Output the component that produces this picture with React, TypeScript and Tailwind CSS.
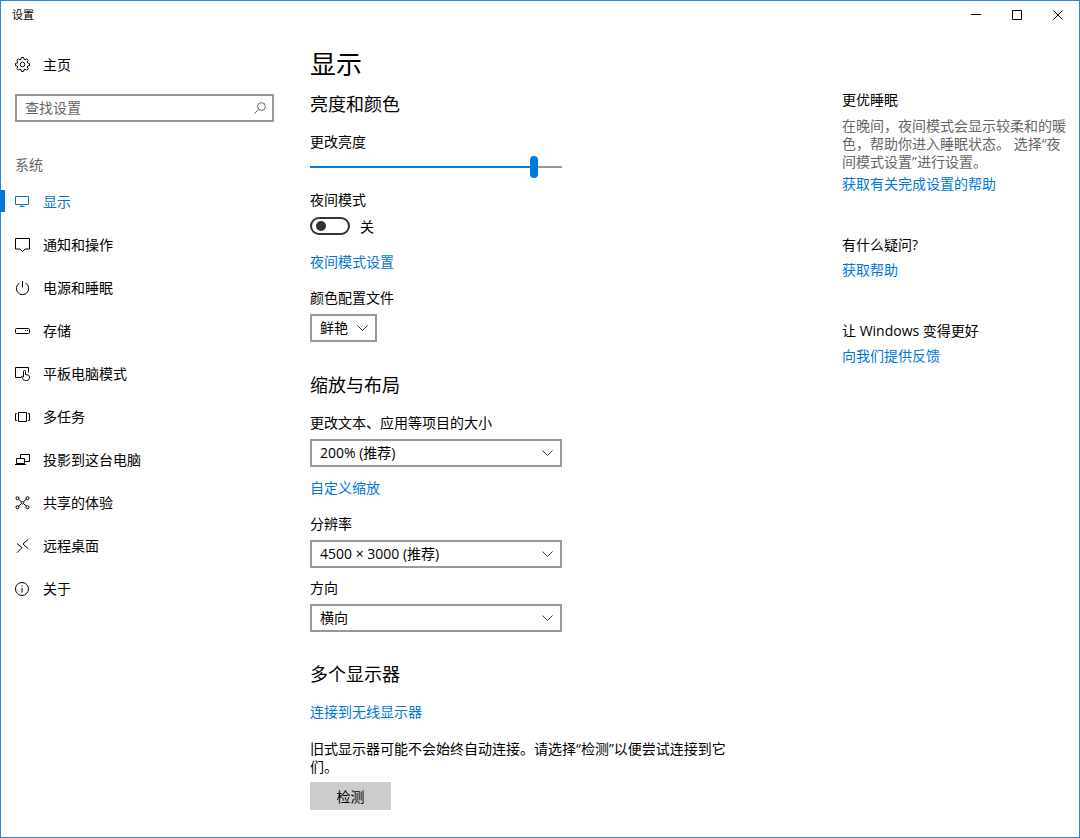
import {useState} from "react";
import type {CSSProperties, ReactNode} from "react";

const NAV_ITEMS = [
  {id: "display", label: "显示"},
  {id: "notifications", label: "通知和操作"},
  {id: "power", label: "电源和睡眠"},
  {id: "storage", label: "存储"},
  {id: "tablet", label: "平板电脑模式"},
  {id: "multitasking", label: "多任务"},
  {id: "projecting", label: "投影到这台电脑"},
  {id: "shared", label: "共享的体验"},
  {id: "remote", label: "远程桌面"},
  {id: "about", label: "关于"},
];

const GLYPHS: Record<string, ReactNode> = {
  display: <path d="M1.5 2.5h13v8h-13zM8 10.5v2M5.5 12.5h5" />,
  notifications: <path d="M1.5 1.5h14V12H11l-2.5 2.5L6 12H1.5z" />,
  power: <path d="M8.5 1v6.5M5.5 3a6.2 6.2 0 1 0 6 0" />,
  storage: (
    <>
      <rect x="1.5" y="5.5" width="14" height="5" rx="1" />
      <path d="M11 7.5h1M13 7.5h1" />
    </>
  ),
  tablet: (
    <path d="M7 11.5H1.5v-10h13v5M9.5 11V5.5a1 1 0 0 1 2 0v3l2.8.7c.8.2 1.2.8 1.2 1.6 0 2.2-.9 3.7-2.8 3.7h-1.4c-1.1 0-1.9-.6-2.5-1.6l-1.4-2.3c.7-.6 1.5-.3 2.1.4" />
  ),
  multitasking: <path d="M4.5 3.5h8v9h-8zM2.8 4.5H1.5v7h1.3M14.2 4.5h1.3v7h-1.3" />,
  projecting: <path d="M6.5 6.5v-4h9v7h-5M2.5 11.5v-5h8v5zM1 12.5h11" />,
  shared: (
    <>
      <circle cx="3.5" cy="3.2" r="1.5" />
      <circle cx="13.5" cy="3.2" r="1.5" />
      <circle cx="3.5" cy="12.2" r="1.5" />
      <circle cx="13.5" cy="12.2" r="1.5" />
      <circle cx="8.5" cy="7.7" r="1.3" />
      <path d="m4.6 4.2 2.9 2.6M12.4 4.2 9.5 6.8M4.6 11.2l2.9-2.6M12.4 11.2 9.5 8.6" />
    </>
  ),
  remote: <path d="m3 5.5 5 4.2-5 5M14 1.5 9 6l5 4.5" />,
  about: (
    <>
      <circle cx="8" cy="8" r="6.5" />
      <path d="M8 7v4.5M8 4.5v1" />
    </>
  ),
  home: (
    <>
      <path
        strokeLinejoin="round"
        d="M7.4 1.5h2.2l.4 1.8 1.1.5 1.6-1 1.5 1.5-1 1.6.5 1.1 1.8.4v2.2l-1.8.4-.5 1.1 1 1.6-1.5 1.5-1.6-1-1.1.5-.4 1.8H7.4L7 13.700l-1.100-.5-1.600 1-1.500-1.500 1-1.600-.5-1.100-1.800-.4V7.400L3.300 7l.5-1.100-1-1.600 1.500-1.500 1.600 1L7 3.300z"
      />
      <circle cx="8.5" cy="8.5" r="2.3" />
    </>
  ),
};

function Glyph({name}: {name: string}) {
  return (
    <svg viewBox="0 0 16 16" className="size-4 shrink-0 overflow-visible" fill="none" stroke="currentColor" aria-hidden="true">
      {GLYPHS[name]}
    </svg>
  );
}

function SectionTitle({children}: {children: ReactNode}) {
  return <h2 className="text-lg leading-7">{children}</h2>;
}

function TextLink({className = "", children}: {className?: string; children: ReactNode}) {
  return (
    <a href="#" className={`block w-fit leading-5 text-[#0078d7] hover:text-[#666] ${className}`}>
      {children}
    </a>
  );
}

type SelectFieldProps = {
  id: string;
  label: string;
  options: string[];
  className: string;
  compact?: boolean;
};

function SelectField({id, label, options, className, compact}: SelectFieldProps) {
  return (
    <div className={className}>
      <label htmlFor={id} className="block leading-5">
        {label}
      </label>
      <div className={`relative mt-1.5 ${compact ? "w-[67px]" : "max-w-[252px]"}`}>
        <select
          id={id}
          className="block h-7 w-full appearance-none border-2 border-[#999] bg-white pr-6 pb-0.5 pl-2 outline-none hover:border-[#666]"
        >
          {options.map((option) => (
            <option key={option}>{option}</option>
          ))}
        </select>
        <svg
          viewBox="0 0 12 8"
          className="pointer-events-none absolute top-2.5 right-2 h-2 w-3"
          fill="none"
          stroke="#333"
          aria-hidden="true"
        >
          <path d="m.5 1.5 5 5 5-5" />
        </svg>
      </div>
    </div>
  );
}

function TitleBar() {
  return (
    <header className="flex h-7 items-center justify-between pr-px pl-[11px]">
      <span className="text-[11px]">设置</span>
      <div className="flex h-full">
        <button type="button" aria-label="最小化" className="grid w-[41px] place-items-center hover:bg-[#e5e5e5]">
          <svg viewBox="0 0 10 10" className="size-2.5" stroke="currentColor" fill="none">
            <path d="M0 4.5h10" />
          </svg>
        </button>
        <button type="button" aria-label="最大化" className="grid w-[41px] place-items-center hover:bg-[#e5e5e5]">
          <svg viewBox="0 0 10 10" className="size-2.5" stroke="currentColor" fill="none">
            <path d="M.5.5h9v9h-9z" />
          </svg>
        </button>
        <button type="button" aria-label="关闭" className="grid w-[41px] place-items-center hover:bg-[#e81123] hover:text-white">
          <svg viewBox="0 0 10 10" className="size-2.5" stroke="currentColor" fill="none">
            <path d="m.5.5 9 9M9.5.5l-9 9" />
          </svg>
        </button>
      </div>
    </header>
  );
}

function Sidebar() {
  const [active, setActive] = useState("display");

  return (
    <nav className="w-[273px] shrink-0 pt-[21px]">
      <button type="button" className="flex h-7 items-center gap-[13px] pl-[13px]">
        <Glyph name="home" />
        主页
      </button>
      <div className="relative mt-4 ml-3.5">
        <input
          type="text"
          aria-label="查找设置"
          placeholder="查找设置"
          className="block h-7 w-full border-2 border-[#999] pr-7 pb-0.5 pl-2 outline-none placeholder:text-[#666] focus:border-[#0078d7]"
        />
        <svg viewBox="0 0 12 12" className="absolute top-2 right-2 size-3" fill="none" stroke="#666" aria-hidden="true">
          <circle cx="7.5" cy="4.5" r="3.9" />
          <path d="M4.7 7.3.5 11.5" />
        </svg>
      </div>
      <h2 className="mt-[33px] pl-3.5 leading-5 text-[#666]">系统</h2>
      <ul className="mt-[5px]">
        {NAV_ITEMS.map((item) => (
          <li key={item.id} className="relative">
            {item.id === active ? <span className="absolute top-2.5 -left-px h-[22px] w-[5px] bg-[#0078d7]" /> : null}
            <a
              href="#"
              onClick={() => setActive(item.id)}
              className={`flex h-[43px] items-center gap-[13px] pl-[13px] ${item.id === active ? "text-[#0078d7]" : ""}`}
            >
              <Glyph name={item.id} />
              {item.label}
            </a>
          </li>
        ))}
      </ul>
    </nav>
  );
}

function DisplaySettings() {
  const [brightness, setBrightness] = useState(90);
  const [nightLight, setNightLight] = useState(false);

  return (
    <main className="min-w-0 flex-1 pt-[17px] pl-9">
      <h1 className="text-[26px] leading-9">显示</h1>

      <section className="mt-2">
        <SectionTitle>亮度和颜色</SectionTitle>
        <label htmlFor="brightness" className="mt-3.5 block leading-5">
          更改亮度
        </label>
        <input
          id="brightness"
          type="range"
          value={brightness}
          onChange={(event) => setBrightness(Number(event.target.value))}
          style={{"--fill": `${brightness}%`} as CSSProperties}
          className="mt-1 block h-[22px] w-full max-w-[252px] appearance-none bg-[linear-gradient(to_right,#0078d7_var(--fill),#999_var(--fill))] bg-[length:100%_2px] bg-center bg-no-repeat outline-none [&::-webkit-slider-thumb]:h-[22px] [&::-webkit-slider-thumb]:w-2 [&::-webkit-slider-thumb]:appearance-none [&::-webkit-slider-thumb]:rounded-full [&::-webkit-slider-thumb]:bg-[#0078d7]"
        />
        <label htmlFor="night-light" className="mt-3 block leading-5">
          夜间模式
        </label>
        <div className="mt-1.5 flex h-5 items-center gap-2.5">
          <input
            id="night-light"
            type="checkbox"
            role="switch"
            checked={nightLight}
            onChange={(event) => setNightLight(event.target.checked)}
            className="flex h-[18px] w-10 appearance-none items-center rounded-full border-2 border-[#333] px-1 before:size-2.5 before:rounded-full before:bg-[#333] checked:justify-end checked:border-[#0078d7] checked:bg-[#0078d7] checked:before:bg-white"
          />
          <span>{nightLight ? "开" : "关"}</span>
        </div>
        <TextLink className="mt-4">夜间模式设置</TextLink>
        <SelectField id="color-profile" label="颜色配置文件" options={["鲜艳", "sRGB"]} className="mt-4" compact />
      </section>

      <section className="mt-[29px]">
        <SectionTitle>缩放与布局</SectionTitle>
        <SelectField
          id="scale"
          label="更改文本、应用等项目的大小"
          options={["200% (推荐)", "175%", "150%", "125%", "100%"]}
          className="mt-3.5"
        />
        <TextLink className="mt-[11px]">自定义缩放</TextLink>
        <SelectField id="resolution" label="分辨率" options={["4500 × 3000 (推荐)", "3000 × 2000"]} className="mt-4" />
        <SelectField id="orientation" label="方向" options={["横向", "纵向"]} className="mt-2.5" />
      </section>

      <section className="mt-7">
        <SectionTitle>多个显示器</SectionTitle>
        <TextLink className="mt-3.5">连接到无线显示器</TextLink>
        <p className="mt-[18px] max-w-[420px] leading-[18px]">旧式显示器可能不会始终自动连接。请选择“检测”以便尝试连接到它们。</p>
        <button type="button" className="mt-1.5 h-7 w-[81px] bg-[#ccc] hover:bg-[#bbb]">
          检测
        </button>
      </section>
    </main>
  );
}

function HelpPanel() {
  return (
    <aside className="w-[237px] shrink-0 pt-[61px] pr-2">
      <section>
        <h3 className="leading-5">更优睡眠</h3>
        <p className="mt-[7px] leading-[18px] text-[#666]">
          在晚间，夜间模式会显示较柔和的暖色，帮助你进入睡眠状态。 选择“夜间模式设置”进行设置。
        </p>
        <TextLink className="mt-[3px]">获取有关完成设置的帮助</TextLink>
      </section>
      <section className="mt-[41px]">
        <h3 className="leading-5">有什么疑问?</h3>
        <TextLink className="mt-[5px]">获取帮助</TextLink>
      </section>
      <section className="mt-[41px]">
        <h3 className="leading-5">让 Windows 变得更好</h3>
        <TextLink className="mt-[5px]">向我们提供反馈</TextLink>
      </section>
    </aside>
  );
}

export default function App() {
  return (
    <div
      lang="zh-CN"
      className="min-h-screen border border-[#2b88d8] bg-white font-['Open_Sans','Noto_Sans_CJK_SC',sans-serif] text-[14px] text-black"
    >
      <TitleBar />
      <div className="flex">
        <Sidebar />
        <DisplaySettings />
        <HelpPanel />
      </div>
    </div>
  );
}
